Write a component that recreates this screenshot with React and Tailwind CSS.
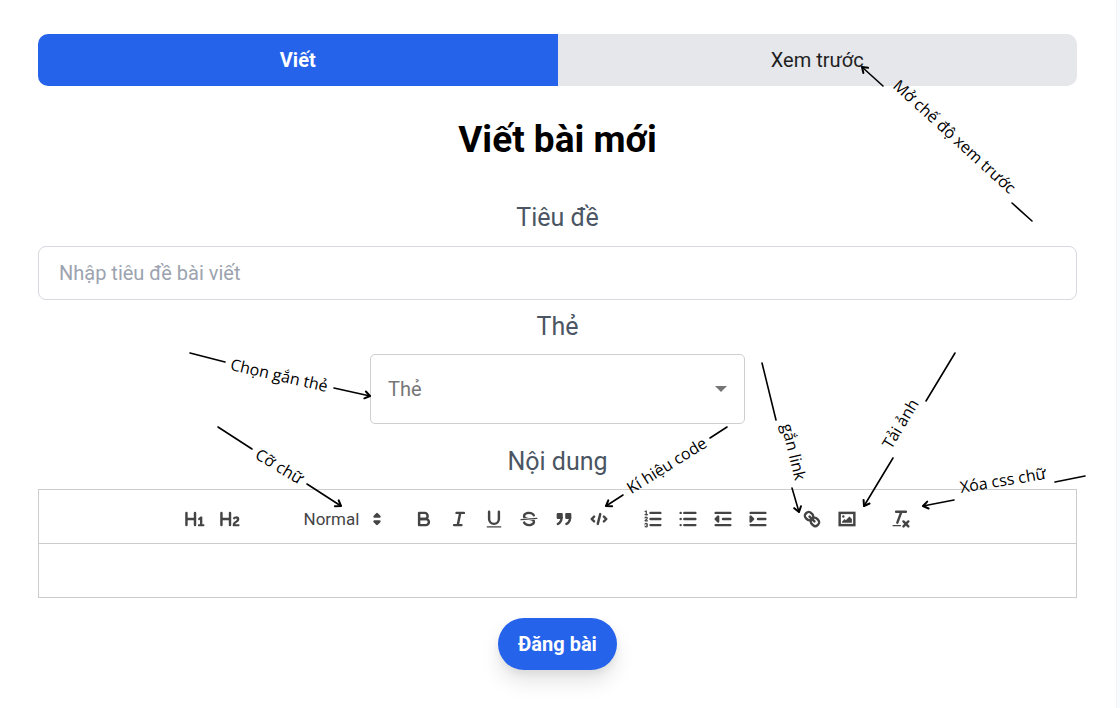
import React from "react";

function Glyph({ children }) {
  return (
    <svg
      viewBox="0 0 18 18"
      className="size-[22px]"
      fill="none"
      stroke="#444"
      strokeWidth="2"
      strokeLinecap="round"
      strokeLinejoin="round"
      aria-hidden="true"
    >
      {children}
    </svg>
  );
}

const solid = { fill: "#444", stroke: "none" };

const groups = {
  headers: [
    ["Tiêu đề 1", <path {...solid} d="M10,4V14a1,1,0,0,1-2,0V10H3v4a1,1,0,0,1-2,0V4A1,1,0,0,1,3,4V8H8V4a1,1,0,0,1,2,0Zm6.06787,9.209H14.98975V7.59863a.54085.54085,0,0,0-.605-.60547h-.62744a1.01119,1.01119,0,0,0-.748.29688L11.645,8.56641a.5435.5435,0,0,0-.022.8584l.28613.30762a.53861.53861,0,0,0,.84717.0332l.09912-.08789a1.2137,1.2137,0,0,0,.2417-.35254h.02246s-.01123.30859-.01123.60547V13.209H12.041a.54085.54085,0,0,0-.605.60547v.43945a.54085.54085,0,0,0,.605.60547h4.02686a.54085.54085,0,0,0,.605-.60547v-.43945A.54085.54085,0,0,0,16.06787,13.209Z" />],
    ["Tiêu đề 2", <path {...solid} d="M16.73975,13.81445v.43945a.54085.54085,0,0,1-.605.60547H11.855a.58392.58392,0,0,1-.64893-.60547V14.0127c0-2.90527,3.39941-3.42187,3.39941-4.55469a.77675.77675,0,0,0-.84717-.78125,1.17684,1.17684,0,0,0-.83594.38477c-.2749.26367-.561.374-.85791.13184l-.4292-.34082c-.30811-.24219-.38525-.51758-.1543-.81445a2.97155,2.97155,0,0,1,2.45361-1.17676,2.45393,2.45393,0,0,1,2.68408,2.40918c0,2.45312-3.1792,2.92676-3.27832,3.93848h2.79443A.54085.54085,0,0,1,16.73975,13.81445ZM9,3A.99974.99974,0,0,0,8,4V8H3V4A1,1,0,0,0,1,4V14a1,1,0,0,0,2,0V10H8v4a1,1,0,0,0,2,0V4A.99974.99974,0,0,0,9,3Z" />],
  ],
  inline: [
    ["Đậm", <><path d="M5,4H9.5A2.5,2.5,0,0,1,12,6.5v0A2.5,2.5,0,0,1,9.5,9H5V4Z" /><path d="M5,9h5.5A2.5,2.5,0,0,1,13,11.5v0A2.5,2.5,0,0,1,10.5,14H5V9Z" /></>],
    ["Nghiêng", <path d="M7,4H13M5,14H11M8,14L10,4" />],
    ["Gạch chân", <><path d="M5,3V9a4.012,4.012,0,0,0,4,4H9a4.012,4.012,0,0,0,4-4V3" /><rect {...solid} x="3" y="15" width="12" height="1" rx="0.5" /></>],
    ["Gạch ngang", <><path strokeWidth="1" d="M15.5,8.5L2.5,9.5" /><path {...solid} d="M9.007,8C6.542,7.791,6,7.519,6,6.5,6,5.792,7.283,5,9,5c1.571,0,2.765.679,2.969,1.309a1,1,0,0,0,1.9-.617C13.356,4.106,11.354,3,9,3,6.2,3,4,4.538,4,6.5a3.2,3.2,0,0,0,.5,1.843Z" /><path {...solid} d="M8.984,10C11.457,10.208,12,10.479,12,11.5c0,.708-1.283,1.5-3,1.5-1.571,0-2.765-.679-2.969-1.309a1,1,0,1,0-1.9.617C4.644,13.894,6.646,15,9,15c2.8,0,5-1.538,5-3.5a3.2,3.2,0,0,0-.5-1.843Z" /></>],
    ["Trích dẫn", <g fill="#444"><rect x="4" y="5" width="3" height="3" /><rect x="11" y="5" width="3" height="3" /><path d="M7,8c0,4.031-3,5-3,5" /><path d="M14,8c0,4.031-3,5-3,5" /></g>],
    ["Mã", <path d="M5,7L3,9L5,11M13,7L15,9L13,11M10,5L8,13" />],
  ],
  lists: [
    ["Danh sách số", <><path d="M7,4H15M7,9H15M7,14H15" /><path strokeWidth="1" d="M2.5,5.5H4.5M4.5,10.5h-2c0-.234,1.85-1.076,1.85-2.234A0.959,0.959,0,0,0,2.5,8.156M2.5,14.846a0.959,0.959,0,0,0,1.85-.109A0.7,0.7,0,0,0,3.75,14a0.688,0.688,0,0,0,.6-0.736,0.959,0.959,0,0,0-1.85-.109" /><path {...solid} d="M3.5,6A0.5,0.5,0,0,1,3,5.5V3.085l-0.276.138A0.5,0.5,0,0,1,2.053,3c-0.124-.247-0.023-0.324.224-0.447l1-.5A0.5,0.5,0,0,1,4,2.5v3A0.5,0.5,0,0,1,3.5,6Z" /></>],
    ["Danh sách", <path d="M6,4H15M6,9H15M6,14H15M3,4H3M3,9H3M3,14H3" />],
    ["Giảm thụt lề", <><path d="M3,14H15M3,4H15M9,9H15" /><path fill="#444" d="M5,7V11L3,9Z" /></>],
    ["Tăng thụt lề", <><path d="M3,14H15M3,4H15M9,9H15" /><path fill="#444" d="M3,7V11L5,9Z" /></>],
  ],
  media: [
    ["Liên kết", <><path d="M7,7L11,11" /><path d="M8.9,4.577a3.476,3.476,0,0,1,.36,4.679A3.476,3.476,0,0,1,4.577,8.9C3.185,7.5,2.035,6.4,4.217,4.217S7.5,3.185,8.9,4.577Z" /><path d="M13.423,9.1a3.476,3.476,0,0,0-4.679-.36,3.476,3.476,0,0,0,.36,4.679c1.392,1.392,2.5,2.542,4.679.36S14.815,10.5,13.423,9.1Z" /></>],
    ["Hình ảnh", <><rect x="3" y="4" width="12" height="10" strokeLinejoin="miter" /><circle {...solid} cx="6" cy="7" r="1" /><path {...solid} d="M5,12V11L7,9L8,10L11,7L13,9V12Z" /></>],
  ],
  clean: [
    ["Xóa định dạng", <><path d="M5,3H13M6,12L9.35,3M11,11L15,15M15,11L11,15" /><rect {...solid} x="2" y="14" width="7" height="1" rx="0.5" /></>],
  ],
};

function ToolGroup({ items }) {
  return (
    <div className="mr-[19px] flex">
      {items.map(([label, icon]) => (
        <button key={label} type="button" aria-label={label} className="flex h-[30px] w-[35px] items-center justify-center">
          <Glyph>{icon}</Glyph>
        </button>
      ))}
    </div>
  );
}

/* Each note: text centre and angle, tail line, and arrow line ending at its tip. */
const notes = [
  { text: "Mở chế độ xem trước", at: [954, 137], angle: 42.5, tail: [1012, 203, 1032, 221], arrow: [883, 86, 862, 67] },
  { text: "Chọn gắn thẻ", at: [279, 376], angle: 13, tail: [190, 353, 225, 362], arrow: [334, 388, 370, 396] },
  { text: "Cỡ chữ", at: [279, 467], angle: 31, tail: [218, 427, 252, 449], arrow: [307, 484, 341, 506] },
  { text: "Kí hiệu code", at: [667, 466], angle: -32, tail: [727, 427, 710, 438], arrow: [623, 495, 606, 506] },
  { text: "gắn link", at: [793, 452], angle: 76, tail: [762, 363, 776, 420], arrow: [792, 488, 799, 512] },
  { text: "Tải ảnh", at: [901, 424], angle: -59, tail: [955, 353, 926, 401], arrow: [893, 458, 864, 506] },
  { text: "Xóa css chữ", at: [1003, 481], angle: -9.5, tail: [1085, 476, 1055, 482], arrow: [954, 500, 923, 506] },
];

function Note({ text, at, angle, tail, arrow }) {
  const [x1, y1, x2, y2] = arrow;
  const heading = (Math.atan2(y2 - y1, x2 - x1) * 180) / Math.PI;
  return (
    <g>
      <g stroke="#000" strokeWidth="1.6" strokeLinecap="round" strokeLinejoin="round" fill="none">
        <line x1={tail[0]} y1={tail[1]} x2={tail[2]} y2={tail[3]} />
        <line x1={x1} y1={y1} x2={x2} y2={y2} />
        <path strokeWidth="2" d="M-5,-3.5L0,0L-5,3.5" transform={`translate(${x2} ${y2}) rotate(${heading})`} />
      </g>
      <text
        transform={`translate(${at[0]} ${at[1]}) rotate(${angle})`}
        y="5"
        textAnchor="middle"
        className="fill-black font-['Open_Sans',sans-serif] text-[16px]"
      >
        {text}
      </text>
    </g>
  );
}

export default function App() {
  return (
    <div className="relative min-h-screen overflow-x-hidden bg-gray-50 pr-[3px] font-[Roboto,sans-serif] text-xl">
      <form
        className="flex min-h-screen flex-col items-center border-r border-gray-100 bg-white pt-[34px] pr-[39px] pl-[38px]"
        onSubmit={(e) => e.preventDefault()}
      >
        <div className="flex w-full overflow-hidden rounded-[10px]">
          <button type="button" className="h-[52px] flex-1 bg-[#2563eb] font-bold text-white">Viết</button>
          <button type="button" className="h-[52px] flex-1 bg-[#e5e7eb] text-[#1f1f1f]">Xem trước</button>
        </div>

        <h1 className="mt-8 text-[37px] leading-[44px] font-bold text-black">Viết bài mới</h1>

        <label htmlFor="title" className="mt-[38px] text-[25px] leading-9 text-[#4b5563]">Tiêu đề</label>
        <input
          id="title"
          type="text"
          placeholder="Nhập tiêu đề bài viết"
          className="mt-[10px] h-[54px] w-full rounded-lg border border-[#d6d9de] bg-white px-5 placeholder:text-[#9ca3af]"
        />

        <label htmlFor="tag" className="mt-[9px] text-[25px] leading-9 text-[#4b5563]">Thẻ</label>
        <div className="relative mt-[9px] w-[375px] max-w-full">
          <select id="tag" className="h-[70px] w-full appearance-none rounded-[5px] border border-[#cfcfcf] bg-white px-[17px] text-[#777]">
            <option>Thẻ</option>
          </select>
          <svg viewBox="0 0 12 6" className="pointer-events-none absolute top-8 right-[18px] h-[6px] w-3" aria-hidden="true">
            <path d="M0,0H12L6,6Z" fill="#757575" />
          </svg>
        </div>

        <label htmlFor="content" className="mt-5 text-[25px] leading-9 text-[#4b5563]">Nội dung</label>
        <div className="mt-[9px] w-full border border-[#ccc]">
          <div className="flex flex-wrap justify-center border-b border-[#ccc] pt-[14px] pb-[9px]">
            <ToolGroup items={groups.headers} />
            <div className="relative mr-[19px] w-[121px]">
              <select aria-label="Cỡ chữ" className="h-[30px] w-full appearance-none bg-transparent pl-[37px] text-[17px] leading-[30px] text-[#444]">
                <option>Normal</option>
              </select>
              <span className="pointer-events-none absolute top-1 right-0">
                <Glyph>
                  <path fill="#444" d="M7,11L9,13L11,11Z" />
                  <path fill="#444" d="M7,7L9,5L11,7Z" />
                </Glyph>
              </span>
            </div>
            <ToolGroup items={groups.inline} />
            <ToolGroup items={groups.lists} />
            <ToolGroup items={groups.media} />
            <ToolGroup items={groups.clean} />
          </div>
          <textarea id="content" className="block h-[53px] w-full resize-none px-5 py-3 outline-none" />
        </div>

        <button type="submit" className="mt-5 h-[52px] rounded-full bg-[#2563eb] px-5 font-bold text-white shadow-[0_12px_20px_rgba(0,0,0,0.1),0_4px_7px_rgba(0,0,0,0.06)]">
          Đăng bài
        </button>
      </form>

      <svg width="1120" height="708" className="pointer-events-none absolute top-0 left-0">
        {notes.map((note) => (
          <Note key={note.text} {...note} />
        ))}
      </svg>
    </div>
  );
}
